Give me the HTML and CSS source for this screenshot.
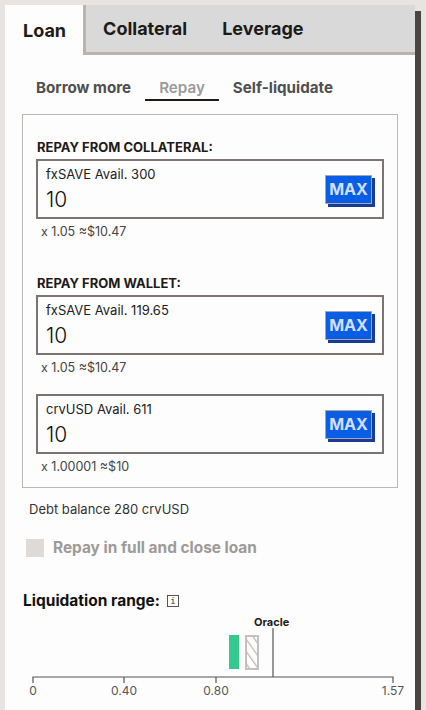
FILE: index.html
```html
<!DOCTYPE html>
<html lang="en">
  <head>
    <meta charset="UTF-8" />
    <meta name="viewport" content="width=device-width, initial-scale=1.0" />
    <title>Manage loan</title>
    <link rel="stylesheet" href="styles.css">
  </head>

  <body>
    <div class="card">
      <div class="tabs">
        <button class="tab active">Loan</button>
        <button class="tab first">Collateral</button>
        <button class="tab">Leverage</button>
        <div class="tab-fill"></div>
      </div>

      <div class="content">
        <div class="subtabs">
          <button class="subtab">Borrow more</button>
          <button class="subtab current">Repay</button>
          <button class="subtab">Self-liquidate</button>
        </div>

        <div class="box">
          <div class="section">
            <h3>Repay from collateral:</h3>
            <div class="field">
              <div class="field-main">
                <label>fxSAVE Avail. 300</label>
                <input type="text" value="10" />
              </div>
              <button class="max">MAX</button>
            </div>
            <p class="rate">x 1.05 ≈$10.47</p>
          </div>

          <div class="section wallet">
            <h3>Repay from wallet:</h3>
            <div class="field">
              <div class="field-main">
                <label>fxSAVE Avail. 119.65</label>
                <input type="text" value="10" />
              </div>
              <button class="max">MAX</button>
            </div>
            <p class="rate">x 1.05 ≈$10.47</p>

            <div class="field next">
              <div class="field-main">
                <label>crvUSD Avail. 611</label>
                <input type="text" value="10" />
              </div>
              <button class="max">MAX</button>
            </div>
            <p class="rate">x 1.00001 ≈$10</p>
          </div>
        </div>

        <p class="debt">Debt balance 280 crvUSD</p>

        <label class="check">
          <span class="checkbox"></span>
          Repay in full and close loan
        </label>

        <div class="liq-title">
          Liquidation range:
          <span class="info">i</span>
        </div>

        <svg class="chart" width="376" height="100" viewBox="0 0 376 100">
          <defs>
            <pattern id="hatch" width="7" height="7" patternUnits="userSpaceOnUse" patternTransform="rotate(-35)">
              <rect width="7" height="7" fill="#fdfdfd" />
              <line x1="0" y1="0" x2="0" y2="7" stroke="#bdb9b6" stroke-width="2.5" />
            </pattern>
          </defs>
          <text x="232" y="13" class="oracle">Oracle</text>
          <line x1="251" y1="15" x2="251" y2="64" stroke="#555" stroke-width="1.2" />
          <rect x="207" y="22" width="10" height="34" fill="#34c98e" />
          <rect x="224" y="23" width="12" height="33" fill="url(#hatch)" stroke="#c4c0bd" stroke-width="2" />
          <path d="M11 70 V64 H371 V70 M102 64 V70 M194 64 V70" fill="none" stroke="#555" stroke-width="1.2" />
          <text x="11" y="82" class="tick">0</text>
          <text x="102" y="82" class="tick">0.40</text>
          <text x="194" y="82" class="tick">0.80</text>
          <text x="371" y="82" class="tick">1.57</text>
        </svg>
      </div>
    </div>
  </body>
</html>
```

FILE: styles.css
```css
* {
  margin: 0;
  padding: 0;
  box-sizing: border-box;
}

body {
  font-family: Inter, "Noto Sans", sans-serif;
  background: #e8e4e2;
  color: #1d1a18;
  overflow: hidden;
}

button,
input {
  font-family: inherit;
}

.card {
  margin: 5px 0 0 5px;
  width: 410px;
  min-height: 760px;
  background: #fdfdfd;
  box-shadow: 6px 6px 0 #4a4541;
}

.tabs {
  display: flex;
  height: 50px;
}

.tab {
  border: none;
  background: #d9d9d9;
  border-bottom: 3px solid #bab3ae;
  padding: 0 17px 0 18px;
  font-size: 18px;
  font-weight: 700;
  color: #1d1a18;
  cursor: pointer;
}

.tab.active {
  background: #fdfdfd;
  border-bottom: none;
}

.tab.first {
  border-left: 3px solid #bab3ae;
  padding-left: 17px;
}

.tab-fill {
  flex: 1;
  background: #d9d9d9;
  border-bottom: 3px solid #bab3ae;
}

.content {
  padding: 21px 17px 0 17px;
}

.subtabs {
  display: flex;
  margin-bottom: 13px;
}

.subtab {
  border: none;
  background: none;
  border-bottom: 2px solid transparent;
  padding: 3px 14px 2px 14px;
  line-height: 18px;
  font-size: 15.2px;
  font-weight: 700;
  color: #4f4f4f;
  cursor: pointer;
}

.subtab.current {
  color: #9a9a9a;
  font-weight: 600;
  border-bottom-color: #1d1a18;
}

.box {
  border: 1px solid #bdb8b4;
  padding: 24px 13px 12px 13px;
}

.section h3 {
  font-size: 13px;
  line-height: 16px;
  font-weight: 700;
  text-transform: uppercase;
  margin: 0 0 4px 1px;
}

.section.wallet {
  margin-top: 35px;
}

.field {
  display: flex;
  align-items: center;
  height: 60px;
  border: 2px solid #7b7470;
  padding: 0 9px 0 8px;
}

.field.next {
  margin-top: 18px;
}

.field-main {
  flex: 1;
  display: flex;
  flex-direction: column;
}

.field-main label {
  font-size: 13px;
  line-height: 16px;
  color: #222;
}

.field-main input {
  border: none;
  background: none;
  outline: none;
  font-size: 21px;
  font-weight: 300;
  line-height: 26px;
  height: 26px;
  color: #111;
  margin-top: 5px;
  width: 200px;
}

.max {
  width: 47px;
  height: 29px;
  border: 1px solid #aaa6a3;
  background: #0a5ee6;
  color: #d4dff6;
  font-size: 16px;
  font-weight: 700;
  box-shadow: 3px 3px 0 #183c98;
  margin: 0 1px 0 0;
  cursor: pointer;
}

.rate {
  font-size: 12.5px;
  line-height: 16px;
  color: #444;
  margin: 5px 0 0 5px;
}

.debt {
  font-size: 13px;
  line-height: 16px;
  color: #333;
  margin: 13px 0 0 7px;
}

.check {
  display: flex;
  align-items: center;
  gap: 9px;
  margin: 21px 0 0 4px;
  font-size: 15.4px;
  font-weight: 700;
  color: #9e9a97;
}

.checkbox {
  width: 18px;
  height: 18px;
  background: #dedad8;
}

.liq-title {
  display: flex;
  align-items: center;
  gap: 7px;
  margin: 35px 0 0 1px;
  font-size: 15.5px;
  line-height: 18px;
  font-weight: 700;
  color: #111;
}

.info {
  display: inline-flex;
  align-items: center;
  justify-content: center;
  width: 12px;
  height: 12px;
  border: 1px solid #555;
  font-size: 9px;
  font-weight: 400;
  font-family: "DejaVu Sans Mono", monospace;
  color: #333;
}

.chart {
  display: block;
  margin-top: 3px;
  overflow: visible;
}

.oracle {
  font-size: 11px;
  font-weight: 700;
  fill: #1d1a18;
}

.tick {
  font-size: 12px;
  fill: #555;
  text-anchor: middle;
}
```
